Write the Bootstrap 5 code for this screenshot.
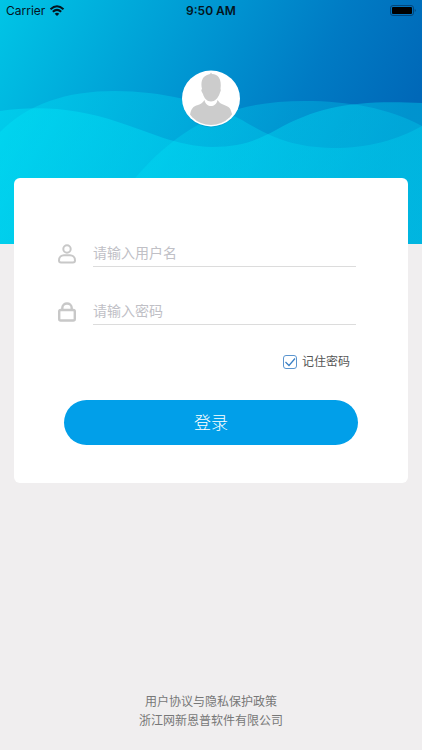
<!DOCTYPE html>
<html lang="zh-CN">
<head>
<meta charset="utf-8">
<meta name="viewport" content="width=device-width, initial-scale=1">
<title>登录</title>
<link href="https://cdn.jsdelivr.net/npm/bootstrap@5.3.0/dist/css/bootstrap.min.css" rel="stylesheet">
<style>
body{background:#f0eeef;font-family:Inter,"Noto Sans CJK SC",sans-serif;font-size:12px;line-height:20px}
.hero{height:244px;background:#0091d2}
.hero-art{z-index:0}
.status-bar{height:22px;color:#04141e;padding:0 6px}
.status-bar .clock{font-weight:600}
.avatar{width:58px;height:58px;margin-top:48px}
.login-card{margin:-66px 14px 0;padding:59px 52px 38px 44px;border-radius:6px;z-index:2}
.field{gap:17px;height:30px;margin-bottom:28px}
.field svg{width:18px;height:20px;margin-top:4px}
.line-input{border:0;border-bottom:1px solid #dcdcdc;border-radius:0;background:none;padding:1px 0 0;font-size:14px;line-height:28px;height:30px;outline:0;color:#555}
.line-input::placeholder{color:#c0c0c6;opacity:1}
.remember{gap:5px;padding-right:6px;height:20px;color:#555;margin:-1px 0 28px}
.remember .form-check-input{width:14px;height:14px;border:1px solid #5b95cf;border-radius:3px;
background-color:#fff;background-size:14px;background-image:url("data:image/svg+xml,%3Csvg xmlns='http://www.w3.org/2000/svg' viewBox='0 0 14 14'%3E%3Cpath d='M2.500 7l3.500 3.500 6-7' fill='none' stroke='%233a7fc4' stroke-width='1.200'/%3E%3C/svg%3E")}
.login-btn{height:45px;margin:0 -2px 0 6px;background:#019fe9;color:#fff;font-size:17px;line-height:24px;font-weight:300}
.login-btn:hover{background:#0190d4;color:#fff}
.legal{color:#777;padding-bottom:20px;line-height:19px}
</style>
<script src="https://cdn.jsdelivr.net/npm/bootstrap@5.3.0/dist/js/bootstrap.bundle.min.js"></script>
</head>
<body class="d-flex flex-column min-vh-100">
<header class="hero position-relative overflow-hidden">
<svg class="hero-art position-absolute top-0 start-0 w-100 h-100" viewBox="0 0 422 244" preserveAspectRatio="none" aria-hidden="true">
<defs>
<linearGradient id="sky" gradientUnits="userSpaceOnUse" x1="0" y1="0" x2="370" y2="190">
<stop offset="0" stop-color="#00c5e6"/><stop offset=".5" stop-color="#0094d1"/><stop offset=".75" stop-color="#007bc4"/><stop offset="1" stop-color="#0068b8"/></linearGradient>
<linearGradient id="foam" gradientUnits="userSpaceOnUse" x1="0" y1="0" x2="422" y2="0">
<stop offset="0" stop-color="#00eafa"/><stop offset=".5" stop-color="#00e2f6"/><stop offset="1" stop-color="#00d8f2"/></linearGradient>
</defs>
<path fill="url(#sky)" d="M0 0H422V244H0z"/>
<g fill="url(#foam)">
<path fill-opacity=".3" d="M0 132C28 104 66 91 115 91C160 91 208 102 242 120C270 137 292 147 332 148C370 148 397 140 422 126V244H0z"/>
<path fill-opacity=".38" d="M0 111C40 105 80 109 118 122C150 132 176 146 212 147C242 147 257 140 276 130C320 105 359 100 422 103V244H0z"/>
<path fill-opacity=".28" d="M136 177C182 124 230 101 305 101C348 101 389 108 422 126V244H94C108 218 119 196 136 177z"/>
</g>
</svg>
<div class="status-bar position-relative row g-0 align-items-center">
<div class="col d-flex align-items-center gap-1"><span>Carrier</span>
<svg width="16" height="12" viewBox="0 0 15 12" fill="none" stroke="#04141e" stroke-width="2" aria-hidden="true"><path d="M1 4.300Q7.500-1.700 14 4.300M3.300 6.800Q7.500 3 11.700 6.800"/><path d="M5.200 8.700Q7.500 7 9.800 8.700L7.500 11z" fill="#04141e" stroke="none"/></svg></div>
<div class="col-auto clock">9:50 AM</div>
<div class="col d-flex justify-content-end">
<svg width="26" height="12" viewBox="0 0 26 12" aria-hidden="true"><rect x=".5" y=".5" width="23" height="10" rx="2.500" fill="none" stroke="#04355f" stroke-opacity=".7"/><rect x="2" y="2" width="20" height="7" rx="1" fill="#000"/><path d="M24.800 4Q26.300 5.500 24.800 7z" fill="#04355f"/></svg></div>
</div>
<div class="position-relative d-flex justify-content-center">
<svg class="avatar" viewBox="0 0 58 58" role="img" aria-label="头像"><defs><clipPath id="face"><circle cx="29" cy="28.500" r="26.500"/></clipPath></defs>
<ellipse cx="29" cy="29.500" rx="28.500" ry="28" fill="#006ba8" opacity=".2"/><ellipse cx="29" cy="28.500" rx="29" ry="28" fill="#fff"/>
<g fill="#ccc" clip-path="url(#face)"><path d="M20 19C18.500 12 20 7 25 5L28 4L29 2.500L30 4C36 4 40 9 38.500 19C39.500 20 38 22 37.500 24C36 28 33 31.500 29 31.500C25 31.500 22 28 21 24C20 22 18.500 20 20 19z"/><path d="M22.500 30C24 38 34 38 35.500 30L38 33C43 36 48 36 49 41L51 47L50 58H8V45C9 39 11 36 16 35Q20 34 22.500 30z"/></g></svg>
</div>
</header>
<main class="login-card bg-white position-relative">
<form>
<div class="field d-flex align-items-center">
<label for="user" class="d-flex" aria-label="用户名"><svg viewBox="0 0 18 20" fill="none" stroke="#c8c8c8" stroke-width="2" aria-hidden="true"><circle cx="9" cy="5" r="3.700"/><path d="M1 16.500C1 13 3.500 11.300 6 11.300H12C14.500 11.300 17 13 17 16.500Q17 18.500 15 18.500H3Q1 18.500 1 16.500z"/></svg></label>
<input id="user" type="text" class="line-input flex-fill w-100" placeholder="请输入用户名">
</div>
<div class="field d-flex align-items-center">
<label for="pass" class="d-flex" aria-label="密码"><svg viewBox="0 0 18 20" fill="none" stroke="#c8c8c8" stroke-width="2.400" aria-hidden="true"><rect x="1.200" y="8" width="15.600" height="10.500" rx="1.500"/><path d="M4.300 8V6C4.300 0 13.700 0 13.700 6V8"/></svg></label>
<input id="pass" type="password" class="line-input flex-fill w-100" placeholder="请输入密码">
</div>
<div class="remember d-flex align-items-center justify-content-end">
<input id="keep" type="checkbox" class="form-check-input m-0" checked>
<label for="keep">记住密码</label>
</div>
<div class="d-grid"><button type="submit" class="login-btn btn border-0 rounded-pill">登录</button></div>
</form>
</main>
<footer class="legal mt-auto text-center">
<a href="#" class="text-reset text-decoration-none">用户协议与隐私保护政策</a>
<div>浙江网新恩普软件有限公司</div>
</footer>
</body>
</html>
